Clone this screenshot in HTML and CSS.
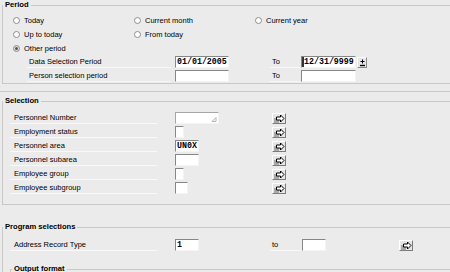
FILE: index.html
```html
<!DOCTYPE html>
<html lang="en">
<head>
  <meta charset="UTF-8">
  <meta name="viewport" content="width=device-width, initial-scale=1.0">
  <title>Address List - Selection</title>
  <link rel="stylesheet" href="styles.css">
</head>
<body>

<fieldset class="group period">
  <legend>Period</legend>
  <div class="radio-row">
    <span class="radio"><span class="dot"></span>Today</span>
    <span class="radio"><span class="dot"></span>Current month</span>
    <span class="radio"><span class="dot"></span>Current year</span>
  </div>
  <div class="radio-row">
    <span class="radio"><span class="dot"></span>Up to today</span>
    <span class="radio"><span class="dot"></span>From today</span>
  </div>
  <div class="radio-row">
    <span class="radio"><span class="dot on"></span>Other period</span>
  </div>
  <div class="row">
    <span class="lbl lbl-sub">Data Selection Period</span>
    <span class="inp date">01/01/2005</span>
    <span class="lbl lbl-to">To</span>
    <span class="inp date-to"><span class="caret"></span>12/31/9999</span>
    <span class="f4-btn">
      <svg width="7" height="9" viewBox="0 0 7 9"><path d="M3.5 1.5v4M1.5 3.5h4" stroke="#000" stroke-width="1" fill="none"/><path d="M1 7.5h5" stroke="#000" stroke-width="1.4"/></svg>
    </span>
  </div>
  <div class="row">
    <span class="lbl lbl-sub">Person selection period</span>
    <span class="inp date"></span>
    <span class="lbl lbl-to">To</span>
    <span class="inp date-to"></span>
  </div>
</fieldset>

<div class="sep"></div>

<fieldset class="group selection">
  <legend>Selection</legend>
  <div class="row">
    <span class="lbl">Personnel Number</span>
    <span class="cell"><span class="inp w43 multi"><svg width="6" height="5" viewBox="0 0 6 5"><path d="M5 0.5v4H1z" stroke="#b4b4b4" fill="none"/></svg></span></span>
    <span class="sel-btn"><svg width="11" height="9" viewBox="0 0 11 9"><rect x="0" y="4" width="5" height="5" fill="#a8a8a8"/><path d="M2.5 3h4V1l3.5 3.5L6.5 8V6h-4z" stroke="#000" fill="#fff"/></svg></span>
  </div>
  <div class="row">
    <span class="lbl">Employment status</span>
    <span class="cell"><span class="inp w8"></span></span>
    <span class="sel-btn"><svg width="11" height="9" viewBox="0 0 11 9"><rect x="0" y="4" width="5" height="5" fill="#a8a8a8"/><path d="M2.5 3h4V1l3.5 3.5L6.5 8V6h-4z" stroke="#000" fill="#fff"/></svg></span>
  </div>
  <div class="row">
    <span class="lbl">Personnel area</span>
    <span class="cell"><span class="inp w23">UN0X</span></span>
    <span class="sel-btn"><svg width="11" height="9" viewBox="0 0 11 9"><rect x="0" y="4" width="5" height="5" fill="#a8a8a8"/><path d="M2.5 3h4V1l3.5 3.5L6.5 8V6h-4z" stroke="#000" fill="#fff"/></svg></span>
  </div>
  <div class="row">
    <span class="lbl">Personnel subarea</span>
    <span class="cell"><span class="inp w23"></span></span>
    <span class="sel-btn"><svg width="11" height="9" viewBox="0 0 11 9"><rect x="0" y="4" width="5" height="5" fill="#a8a8a8"/><path d="M2.5 3h4V1l3.5 3.5L6.5 8V6h-4z" stroke="#000" fill="#fff"/></svg></span>
  </div>
  <div class="row">
    <span class="lbl">Employee group</span>
    <span class="cell"><span class="inp w8"></span></span>
    <span class="sel-btn"><svg width="11" height="9" viewBox="0 0 11 9"><rect x="0" y="4" width="5" height="5" fill="#a8a8a8"/><path d="M2.5 3h4V1l3.5 3.5L6.5 8V6h-4z" stroke="#000" fill="#fff"/></svg></span>
  </div>
  <div class="row">
    <span class="lbl">Employee subgroup</span>
    <span class="cell"><span class="inp w13"></span></span>
    <span class="sel-btn"><svg width="11" height="9" viewBox="0 0 11 9"><rect x="0" y="4" width="5" height="5" fill="#a8a8a8"/><path d="M2.5 3h4V1l3.5 3.5L6.5 8V6h-4z" stroke="#000" fill="#fff"/></svg></span>
  </div>
</fieldset>

<fieldset class="group program">
  <legend>Program selections</legend>
  <div class="row">
    <span class="lbl">Address Record Type</span>
    <span class="inp w24">1</span>
    <span class="lbl lbl-to2">to</span>
    <span class="inp w23 to-inp"></span>
    <span class="sel-btn far"><svg width="11" height="9" viewBox="0 0 11 9"><rect x="0" y="4" width="5" height="5" fill="#a8a8a8"/><path d="M2.5 3h4V1l3.5 3.5L6.5 8V6h-4z" stroke="#000" fill="#fff"/></svg></span>
  </div>
  <fieldset class="group nested">
    <legend>Output format</legend>
    <div class="row"></div>
  </fieldset>
</fieldset>

</body>
</html>
```

FILE: styles.css
```css
body {
  margin: 0;
  width: 470px;
  overflow: hidden;
  background: #ebebeb;
  font-family: "Liberation Sans", Arial, sans-serif;
  font-size: 7.5px;
  color: #000;
}
.group {
  margin: 0 0 0 2px;
  padding: 0 0 0 7px;
  border: 1px solid #c8c8c8;
  min-width: 0;
}
.group legend {
  font-weight: bold;
  font-size: 7.6px;
  line-height: 10px;
  padding: 0 2px;
  margin-left: -7px;
}
.period {
  padding-top: 3px;
}
.period .radio-row,
.period .row {
  padding-left: 3px;
}
.sep {
  margin-top: 7px;
  border-top: 1px solid #c8c8c8;
}
.selection {
  margin-top: 4px;
  padding-top: 5px;
  padding-bottom: 9px;
}
.program {
  margin-top: 17px;
  padding-top: 6px;
}
.nested {
  margin: 12px 0 0 0;
  padding-left: 0;
}
.nested legend {
  margin-left: 1px;
}

/* radio buttons */
.radio-row {
  display: flex;
  align-items: center;
  height: 14px;
}
.radio {
  width: 121px;
  display: flex;
  align-items: center;
}
.dot {
  width: 7px;
  height: 7px;
  box-sizing: border-box;
  border: 1px solid #8e8e8e;
  border-radius: 50%;
  background: #fff;
  margin-right: 4px;
  display: flex;
  align-items: center;
  justify-content: center;
}
.dot.on {
  background: #dedede;
}
.dot.on::after {
  content: "";
  width: 3px;
  height: 3px;
  border-radius: 50%;
  background: #555;
}

/* field rows */
.row {
  display: flex;
  align-items: center;
  height: 14px;
}
.lbl {
  box-sizing: border-box;
  width: 147px;
  height: 12px;
  line-height: 12px;
  padding-left: 4px;
  border-bottom: 1px solid #f8f8f8;
  white-space: nowrap;
}
.lbl-sub {
  width: 144px;
  margin-left: 14px;
  padding-left: 2px;
}
.lbl-to {
  width: 30px;
  margin-left: 41px;
  padding-left: 2px;
}
.lbl-to2 {
  width: 31px;
  margin-left: 71px;
  padding-left: 2px;
}
.cell {
  width: 97px;
  margin-left: 18px;
  display: flex;
}
.inp {
  box-sizing: border-box;
  height: 12px;
  background: #fff;
  border: 1px solid;
  border-color: #868686 #f4f4f4 #f4f4f4 #868686;
  font-family: "Liberation Mono", "Courier New", monospace;
  font-weight: bold;
  font-size: 8.3px;
  line-height: 10px;
  padding-left: 1px;
  display: flex;
  align-items: center;
  white-space: nowrap;
}
.date {
  width: 54px;
  margin-left: 4px;
}
.date-to {
  width: 55px;
  margin-left: 1px;
  padding-left: 0;
}
.caret {
  width: 2px;
  height: 10px;
  background: #333;
}
.w8 { width: 9px; }
.w13 { width: 13px; }
.w23 { width: 24px; }
.w24 { width: 24px; margin-left: 18px; }
.w43 { width: 44px; }
.multi {
  justify-content: flex-end;
  align-items: flex-end;
  padding: 0 1px 1px 0;
  border-color: #a6a6a6 #f4f4f4 #f4f4f4 #a6a6a6;
}
.to-inp {
  margin-left: 1px;
}

/* buttons */
.f4-btn {
  box-sizing: border-box;
  width: 10px;
  height: 11px;
  margin-left: 1px;
  background: #e6e6e6;
  border: 1px solid;
  border-color: #fff #8a8a8a #8a8a8a #fff;
  display: flex;
  align-items: center;
  justify-content: center;
}
.sel-btn {
  box-sizing: border-box;
  width: 14px;
  height: 11px;
  background: #e6e6e6;
  border: 1px solid;
  border-color: #fff #7c7c7c #7c7c7c #fff;
  display: flex;
  align-items: center;
  justify-content: center;
}
.sel-btn.far {
  margin-left: 73px;
}
```
